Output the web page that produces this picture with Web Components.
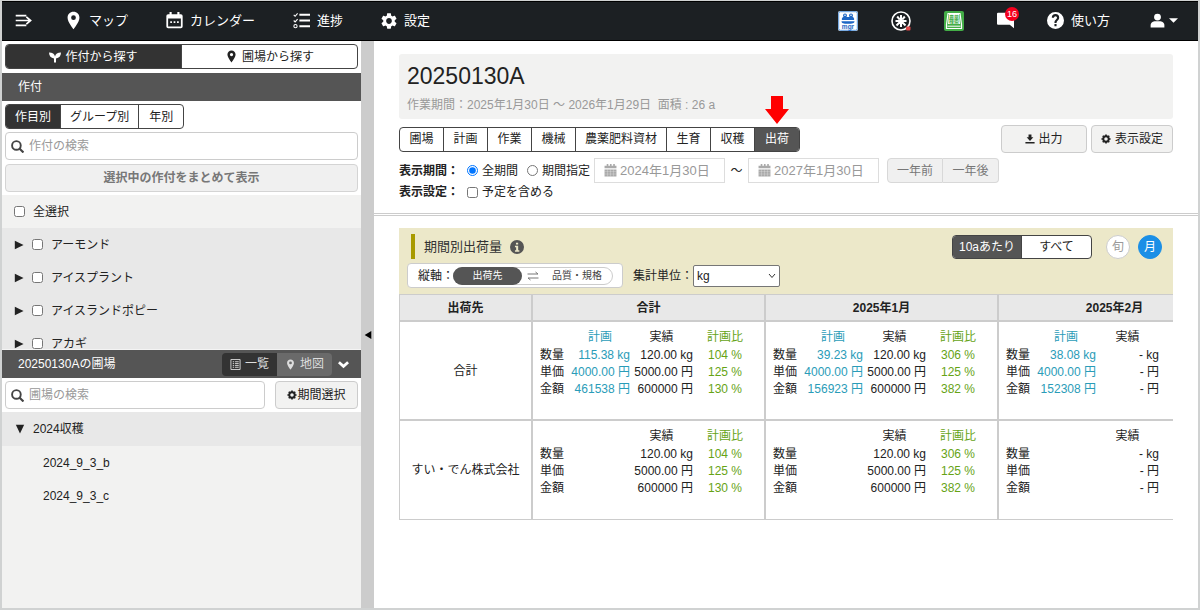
<!DOCTYPE html>
<html lang="ja">
<head>
<meta charset="utf-8">
<meta name="viewport" content="width=device-width, initial-scale=1">
<title>20250130A - 出荷</title>
<style>
  html, body { margin: 0; height: 100%; }
  body {
    font: 12px/16px "Liberation Sans", "Noto Sans CJK JP", sans-serif;
    color: #222;
    background: #fff;
  }
</style>
</head>
<body>
<farm-app></farm-app>

<script>
const BASE = `<style>
  *, *::before, *::after { box-sizing: border-box; }
  button, input, select { font: inherit; color: inherit; margin: 0; }
  button { cursor: pointer; }
  ul { list-style: none; margin: 0; padding: 0; }
  h1, h2, p { margin: 0; font-weight: normal; }
  a { color: inherit; text-decoration: none; }
</style>`;

function define(name, html, setup) {
  const tpl = document.createElement('template');
  tpl.innerHTML = BASE + html;
  customElements.define(name, class extends HTMLElement {
    constructor() {
      super();
      this.attachShadow({ mode: 'open' }).append(tpl.content.cloneNode(true));
    }
    connectedCallback() {
      if (setup && !this.ready) { this.ready = true; setup(this, this.shadowRoot); }
    }
  });
}

/* ---------- icons ---------- */
const PIN = '<path d="M12 1C7.6 1 4.500 4.300 4.500 8.500 4.500 14 12 23 12 23s7.500-9 7.500-14.500C19.500 4.300 16.400 1 12 1zm0 10.500a3 3 0 010-6 3 3 0 010 6z"/>';
const COG = '<circle cx="12" cy="12" r="6.500" fill="none" stroke="currentColor" stroke-width="4.500"/><path d="M12 1v5M12 18v5M1 12h5M18 12h5M4.200 4.200l3.500 3.500M16.300 16.300l3.500 3.500M4.200 19.800l3.500-3.500M16.300 7.700l3.500-3.500" stroke="currentColor" stroke-width="4"/>';
const ICONS = {
  menu: '<path d="M1 5h15M1 12h20M1 19h15M16 7l6 5-6 5" fill="none" stroke="currentColor" stroke-width="2.400"/>',
  pin: PIN,
  calendar: '<path fill-rule="evenodd" d="M5 0h3v3h8V0h3v3h2a2.500 2.500 0 012.500 2.500v15A2.500 2.500 0 0121 23H3a2.500 2.500 0 01-2.500-2.500v-15A2.500 2.500 0 013 3h2zM3 9v11.500h18V9z"/><path d="M6 13h2.400v2.400H6zm4.800 0h2.400v2.400h-2.400zm4.800 0H18v2.400h-2.400z"/>',
  progress: '<path d="M9 4h15M9 12h15M9 20h15" stroke="currentColor" stroke-width="2.800"/><path d="M1 4l2 2 3.500-4M1 12l2 2 3.500-4" fill="none" stroke="currentColor" stroke-width="1.500"/><circle cx="3.500" cy="20" r="2.300" fill="none" stroke="currentColor" stroke-width="1.500"/>',
  gear: '<path d="M19.140 12.940c.04-.3.06-.61.06-.94 0-.32-.02-.64-.07-.94l2.030-1.580c.18-.14.23-.41.12-.61l-1.920-3.320c-.12-.22-.37-.29-.59-.22l-2.390.96c-.5-.38-1.030-.7-1.620-.94l-.36-2.540c-.04-.24-.24-.41-.48-.41h-3.840c-.24 0-.43.17-.47.41l-.36 2.540c-.59.24-1.130.57-1.620.94l-2.390-.96c-.22-.08-.47 0-.59.22L2.740 8.870c-.12.21-.08.47.12.61l2.030 1.580c-.05.3-.09.63-.09.94s.02.64.07.94l-2.030 1.580c-.18.14-.23.41-.12.61l1.920 3.320c.12.22.37.29.59.22l2.390-.96c.5.38 1.030.7 1.620.94l.36 2.540c.05.24.24.41.48.41h3.840c.24 0 .44-.17.47-.41l.36-2.540c.59-.24 1.130-.56 1.620-.94l2.390.96c.22.08.47 0 .59-.22l1.920-3.320c.12-.22.07-.47-.12-.61l-2.010-1.580zM12 15.600c-1.980 0-3.600-1.620-3.600-3.600s1.620-3.600 3.600-3.600 3.600 1.620 3.600 3.600-1.620 3.600-3.600 3.600z"/>',
  cog: COG,
  help: '<path fill-rule="evenodd" d="M12 0a12 12 0 100 24 12 12 0 000-24zm-1.500 20v-3h3v3zm5.600-8.900l-1.200 1.200c-1 1-1.400 1.700-1.400 3.200h-3v-.8c0-1.500.5-2.500 1.500-3.500l1.500-1.500c.5-.5.7-1 .7-1.600a2.200 2.200 0 00-4.400 0H6.800a5.200 5.200 0 0110.400 0c0 1.200-.5 2.300-1.100 3z"/>',
  user: '<circle cx="12" cy="6.500" r="5.500"/><path d="M1 23v-4c0-3.500 4-6 7.500-6h7c3.500 0 7.500 2.500 7.500 6v4z"/>',
  caret: '<path d="M0 6h24L12 18z"/>',
  chat: '<path d="M1.500 1h21A1.500 1.500 0 0124 2.500V23l-6-5H1.500A1.500 1.500 0 010 16.500v-14A1.500 1.500 0 011.500 1z"/>',
  sprout: '<path d="M0 3c7 0 11 3 12 8 1-5 5-8 12-8 0 7-4 11-10 12v8h-4v-8C4 14 0 10 0 3z"/>',
  search: '<circle cx="10" cy="10" r="8" fill="none" stroke="currentColor" stroke-width="3.500"/><path d="M15.500 15.500l7.500 7.500" stroke="currentColor" stroke-width="4"/>',
  list: '<path fill="none" stroke="currentColor" stroke-width="2" d="M2 1h20v22H2z"/><path d="M6 6h3M6 10h3M6 14h3M6 18h3M11 6h8M11 10h8M11 14h8M11 18h8" stroke="currentColor" stroke-width="2"/>',
  chevron: '<path d="M2 7l10 9 10-9" fill="none" stroke="currentColor" stroke-width="6"/>',
  download: '<path d="M8.500 1h7v7H20l-8 9-8-9h4.500zM1 19h22v4H1z"/>',
  date: '<path d="M5 0h3v3h3V0h3v3h3V0h3v3h3v5H1V3h4zM1 10h22v13H1z"/><path d="M1 14h22M1 18.500h22M6.500 10v13M12 10v13M17.500 10v13" stroke="#fff" stroke-opacity=".45"/>',
  info: '<path fill-rule="evenodd" d="M12 0a12 12 0 100 24 12 12 0 000-24zm-1.800 4.500h3.800v3.300h-3.800zM8.500 10H14v7.500h2V20H8.500v-2.500h2v-5h-2z"/>',
  swap: '<path d="M1 8h21l-5-4M23 16H2l5 4" fill="none" stroke="currentColor" stroke-width="2"/>',
  arrow: '<path fill="#f00" d="M6 0h12v13h6L12 28 0 13h6z"/>',
  right: '<path d="M2 2l21 10L2 22z"/>',
  down: '<path d="M2 2h20L12 23z"/>',
  left: '<path d="M22 0v24L2 12z"/>',
  mgr: '<rect width="20" height="20" rx="2" fill="#fff"/><rect x=".7" y=".7" width="18.600" height="18.600" rx="1.500" fill="none" stroke="#2c7bd0" stroke-width=".8"/><g fill="#1e67c4"><circle cx="7" cy="4.500" r="2"/><circle cx="13" cy="4.500" r="2"/><path d="M5 6h10c1 1 1.500 2 1 3H4c-.5-1 0-2 1-3zM3.500 10.200h13c0 2-2 2.600-6.500 2.600s-6.500-.6-6.500-2.600z"/><text x="10" y="17.700" font-size="6.500" font-weight="bold" text-anchor="middle" font-family="Liberation Sans">mgr</text></g><circle cx="7" cy="4.200" r=".8" fill="#fff"/><circle cx="13" cy="4.200" r=".8" fill="#fff"/>',
  rice: '<circle cx="10" cy="10" r="9" fill="none" stroke="#fff" stroke-width="1.600"/><path d="M10 4v12M4.500 10h11M8.800 8.700L6.200 5.500M11.200 8.700l2.600-3.200M9 11l-3.500 3.500M11 11l3.500 3.500" stroke="#fff" stroke-width="2"/><rect x="15" y="15.500" width="4.500" height="4" rx="1" fill="#e04848"/>',
  book: '<rect width="20" height="20" rx="2" fill="#43ad47"/><path d="M4 2.500h12l1.500 11v4h-15v-4z" fill="none" stroke="#fff" stroke-width="1.200"/><path d="M5 3h10l1 10H4z" fill="#fff"/><g fill="#43ad47" font-size="5" text-anchor="middle" font-family="Noto Sans CJK JP" font-weight="bold"><text x="10" y="7.700">農薬</text><text x="10" y="12.300">検索</text></g><path d="M3.500 15.200h13" stroke="#fff" stroke-width="1"/>'
};
const BOXES = { mgr: '0 0 20 20', rice: '0 0 20 20', book: '0 0 20 20', arrow: '0 0 24 28', gear: '2 2 20 20' };

define('ui-icon', `<style>
  :host { display: inline-block; flex: none; width: var(--size, 16px); height: var(--h, var(--size, 16px)); }
  svg { display: block; width: 100%; height: 100%; fill: currentColor; }
</style><svg aria-hidden="true"></svg>`, (el, root) => {
  const svg = root.querySelector('svg'), n = el.getAttribute('name');
  svg.setAttribute('viewBox', BOXES[n] || '0 0 24 24');
  svg.innerHTML = ICONS[n];
});

/* ---------- segmented buttons ---------- */
define('segment-group', `<style>
  :host { display: flex; height: 25px; width: max-content; border: 1px solid #444; border-radius: 4px; background: #fff; }
  :host([fill]) { width: auto; }
  :host([fill]) ::slotted(button) { flex: 1; }
  ::slotted(button) {
    box-sizing: border-box; margin: 0; border: 0; border-right: 1px solid #444; background: none;
    min-width: 44px; padding: 0 9px; line-height: 16px;
    display: flex; align-items: center; justify-content: center; gap: 4px; white-space: nowrap;
  }
  ::slotted(button:last-child) { border-right: 0; }
  /* the host scope's button colour would win without !important */
  ::slotted(button[aria-pressed="true"]) { background: var(--on, #333); color: #fff !important; }
  ::slotted(button:first-child) { border-radius: 3px 0 0 3px; }
  ::slotted(button:last-child) { border-radius: 0 3px 3px 0; }
</style><slot></slot>`);

/* ---------- search box ---------- */
define('search-box', `<style>
  :host { display: block; }
  label { display: flex; align-items: center; gap: 5px; height: 28px; padding: 0 5px; border: 1px solid #ccc; border-radius: 4px; background: #fff; color: #444; }
  ui-icon { --size: 13px; }
  input { flex: 1; min-width: 0; border: 0; padding: 0; outline: 0; background: none; }
  input::placeholder { color: #999; opacity: 1; }
</style><label><ui-icon name="search"></ui-icon><input type="text"></label>`, (el, root) => {
  const i = root.querySelector('input');
  i.placeholder = el.getAttribute('hint');
  i.setAttribute('aria-label', i.placeholder);
});

/* ---------- header ---------- */
define('app-header', `<style>
  :host { display: block; }
  header { display: flex; align-items: center; justify-content: space-between; height: 40px; padding: 0 20px 1px 13px;
    background: #1c2023; border: solid #000; border-width: 1px 0; color: #fff; font-size: 13px; line-height: 20px; }
  nav { display: flex; align-items: center; }
  .left { gap: 38px; }
  .right { gap: 33px; }
  a, button { display: flex; align-items: center; gap: 7px; border: 0; padding: 0; background: none; color: inherit; }
  .menu { --size: 17px; margin-right: -6px; }
  .pin { gap: 6px; }
  .pin ui-icon { --size: 19px; }
  .cal, .list { --size: 17px; }
  .app { --size: 20px; }
  .help ui-icon { --size: 17px; }
  .chat { position: relative; --size: 17px; }
  .badge { position: absolute; left: 8px; top: -5px; width: 14px; height: 14px; border-radius: 7px; background: #f5001d; font-size: 9px; line-height: 14px; text-align: center; }
  .user { gap: 4px; padding-left: 7px; --size: 15px; }
  .user .caret { --size: 9px; }
</style>
<header>
  <nav class="left" aria-label="メイン">
    <button class="menu" aria-label="メニュー"><ui-icon name="menu"></ui-icon></button>
    <a class="pin" href="#map"><ui-icon name="pin"></ui-icon>マップ</a>
    <a class="cal" href="#calendar"><ui-icon name="calendar"></ui-icon>カレンダー</a>
    <a class="list" href="#progress"><ui-icon name="progress"></ui-icon>進捗</a>
    <a href="#settings"><ui-icon name="gear"></ui-icon>設定</a>
  </nav>
  <nav class="right" aria-label="サービス">
    <a class="app" href="#mgr" aria-label="mgr"><ui-icon name="mgr"></ui-icon></a>
    <a class="app" href="#rice" aria-label="米"><ui-icon name="rice"></ui-icon></a>
    <a class="app" href="#book" aria-label="農薬検索"><ui-icon name="book"></ui-icon></a>
    <button class="chat" aria-label="お知らせ"><ui-icon name="chat"></ui-icon><span class="badge">16</span></button>
    <a class="help" href="#help"><ui-icon name="help"></ui-icon>使い方</a>
    <button class="user" aria-label="アカウント"><ui-icon name="user"></ui-icon><ui-icon class="caret" name="caret"></ui-icon></button>
  </nav>
</header>`);

/* ---------- sidebar tree row ---------- */
define('crop-row', `<style>
  :host { display: flex; align-items: center; height: 33px; padding-left: 12px; gap: 8px; line-height: 12px; }
  button { display: flex; border: 0; background: none; padding: 0; color: #222; --size: 10px; }
  label { display: flex; align-items: center; gap: 8px; }
  input { width: 11px; height: 11px; }
</style>
<button aria-label="開く"><ui-icon name="right"></ui-icon></button>
<label><input type="checkbox"><slot></slot></label>`);

/* ---------- sidebar ---------- */
define('crop-sidebar', `<style>
  :host { display: flex; flex-direction: column; flex: 0 0 359px; min-height: 0; background: #f2f2f1; }
  .top { background: #fff; padding: 3px 3px 4px; }
  .bar { display: flex; align-items: center; height: 28px; padding: 0 12px 0 16px; background: #555; color: #fff; }
  .filters { display: flex; flex-direction: column; gap: 3px; padding: 3px; background: #fff; }
  .bulk { height: 28px; margin-top: 1px; border: 1px solid #d4d4d4; border-radius: 4px; background: #f0f0f0; color: #777; font-weight: bold; }
  .all { display: flex; align-items: center; gap: 8px; height: 33px; padding-left: 12px; }
  .all input { width: 11px; height: 11px; }
  .tree { flex: 0 1 122px; overflow: hidden; background: #e8e8e8; border-bottom: 1px solid #f4f4f4; }
  .bar h2 { flex: 1; font-size: 12px; line-height: 16px; }
  .view { display: flex; margin-right: 6px; }
  .view button { display: flex; align-items: center; justify-content: center; gap: 4px; width: 55px; height: 23px; border: 0; padding: 0; color: #ddd; background: #6a6a6a; --size: 11px; border-radius: 0 4px 4px 0; }
  .view button[aria-pressed="true"] { background: #333; border-radius: 4px 0 0 4px; }
  .fold { display: flex; border: 0; background: none; padding: 0; color: #fff; --size: 11px; }
  .find { display: flex; gap: 10px; padding: 3px; background: #fff; }
  .find search-box { flex: 1; }
  .find button { width: 83px; height: 28px; display: flex; align-items: center; justify-content: center; border: 1px solid #ccc; border-radius: 4px; background: #f2f2f1; padding: 0; white-space: nowrap; --size: 10px; }
  .year { display: flex; align-items: center; gap: 8px; width: 100%; height: 34px; padding: 0 13px; border: 0; background: #e8e8e8; --size: 10px; }
  .fields a { display: flex; align-items: center; height: 33px; padding-left: 41px; }
</style>
<div class="top">
  <segment-group fill>
    <button aria-pressed="true"><ui-icon name="sprout" style="--size:12px"></ui-icon>作付から探す</button>
    <button aria-pressed="false"><ui-icon name="pin" style="--size:13px"></ui-icon>圃場から探す</button>
  </segment-group>
</div>
<div class="bar"><h2>作付</h2></div>
<div class="filters">
  <segment-group>
    <button aria-pressed="true">作目別</button><button aria-pressed="false">グループ別</button><button aria-pressed="false">年別</button>
  </segment-group>
  <search-box hint="作付の検索"></search-box>
  <button class="bulk">選択中の作付をまとめて表示</button>
</div>
<label class="all"><input type="checkbox">全選択</label>
<div class="tree">
  <crop-row>アーモンド</crop-row><crop-row>アイスプラント</crop-row><crop-row>アイスランドポピー</crop-row><crop-row>アカギ</crop-row>
</div>
<div class="bar">
  <h2>20250130Aの圃場</h2>
  <div class="view"><button aria-pressed="true"><ui-icon name="list"></ui-icon>一覧</button><button aria-pressed="false"><ui-icon name="pin"></ui-icon>地図</button></div>
  <button class="fold" aria-label="たたむ"><ui-icon name="chevron"></ui-icon></button>
</div>
<div class="find"><search-box hint="圃場の検索"></search-box><button><ui-icon name="cog"></ui-icon>期間選択</button></div>
<button class="year"><ui-icon name="down"></ui-icon>2024収穫</button>
<ul class="fields"><li><a href="#b">2024_9_3_b</a></li><li><a href="#c">2024_9_3_c</a></li></ul>`);

/* ---------- date field ---------- */
define('date-field', `<style>
  :host { display: block; width: 131px; }
  label { display: flex; align-items: center; gap: 3px; height: 25px; padding: 0 9px; border: 1px solid #ddd; background: #fff; color: #aaa; --size: 13px; }
  input { flex: 1; min-width: 0; border: 0; padding: 0; background: none; color: #999; font-size: 13px; }
</style><label><ui-icon name="date"></ui-icon><input type="text" disabled></label>`, (el, root) => {
  const i = root.querySelector('input');
  i.value = el.getAttribute('value');
  i.setAttribute('aria-label', el.getAttribute('label'));
});

/* ---------- crop detail header ---------- */
define('crop-detail', `<style>
  :host { display: block; padding: 13px 25px 12px; border-bottom: 3px double #ccc; }
  .title { height: 65px; padding: 10px 8px; background: #f2f2f1; border-radius: 3px; }
  h1 { font-size: 23px; line-height: 25px; }
  .title p { margin-top: 7px; line-height: 18px; color: #999; white-space: pre-wrap; }
  .tools { display: flex; align-items: center; gap: 4px; margin-top: 6px; }
  .tabs { position: relative; margin-right: auto; --on: #555; }
  .tabs .mark { position: absolute; right: 11px; top: -31px; --size: 24px; --h: 28px; pointer-events: none; }
  .act { display: flex; align-items: center; justify-content: center; gap: 3px; height: 28px; border: 1px solid #ccc; border-radius: 4px; background: #f2f2f1; padding: 0; white-space: nowrap; --size: 10px; }
  .out { width: 86px; }
  .set { width: 82px; gap: 4px; }
  .row { display: flex; align-items: center; margin: 0; padding: 0; border: 0; }
  .period { margin-top: 5px; height: 25px; }
  .plan { height: 18px; }
  b { width: 68px; }
  label { display: flex; align-items: center; gap: 4px; margin-right: 9px; white-space: nowrap; }
  label input { width: 11px; height: 11px; }
  label.span { margin-right: 4px; }
  .wave { width: 23px; text-align: center; }
  .step { display: flex; margin-left: 8px; }
  .step button { width: 56px; height: 25px; padding: 0; border: 1px solid #d8d8d8; background: #f0f0f0; color: #777; border-radius: 4px 0 0 4px; }
  .step button + button { border-left: 0; border-radius: 0 4px 4px 0; }
</style>
<div class="title"><h1>20250130A</h1><p>作業期間：2025年1月30日 ～ 2026年1月29日&nbsp; 面積 : 26 a</p></div>
<div class="tools">
  <div class="tabs">
    <segment-group>
      <button aria-pressed="false">圃場</button><button aria-pressed="false">計画</button><button aria-pressed="false">作業</button><button aria-pressed="false">機械</button><button aria-pressed="false">農薬肥料資材</button><button aria-pressed="false">生育</button><button aria-pressed="false">収穫</button><button aria-pressed="true">出荷</button>
    </segment-group>
    <ui-icon class="mark" name="arrow"></ui-icon>
  </div>
  <button class="act out"><ui-icon name="download"></ui-icon>出力</button>
  <button class="act set"><ui-icon name="cog"></ui-icon>表示設定</button>
</div>
<div class="row period" role="radiogroup" aria-label="表示期間">
  <b>表示期間：</b>
  <label><input type="radio" name="span" checked>全期間</label>
  <label class="span"><input type="radio" name="span">期間指定</label>
  <date-field value="2024年1月30日" label="開始日"></date-field>
  <span class="wave">～</span>
  <date-field value="2027年1月30日" label="終了日"></date-field>
  <div class="step"><button disabled>一年前</button><button disabled>一年後</button></div>
</div>
<div class="row plan"><b>表示設定：</b><label><input type="checkbox">予定を含める</label></div>`);

/* ---------- figures inside a table cell ---------- */
define('cell-figures', `<style>
  :host { display: block; }
  table { border-collapse: collapse; table-layout: fixed; width: 217px; line-height: 17px; }
  th, td { padding: 0; text-align: right; font-weight: normal; white-space: nowrap; }
  thead th { height: 20px; text-align: center; }
  tbody th { text-align: left; }
  .l { width: 30px; } .p { width: 60px; } .a { width: 63px; } .r { width: 64px; }
  tr > :nth-child(2) { color: #2a9cb8; }
  tr > :nth-child(4) { color: #66a315; text-align: center; }
</style>
<table><colgroup><col class="l"><col class="p"><col class="a"><col class="r"></colgroup><thead></thead><tbody></tbody></table>`, (el, root) => {
  const cols = ['plan', 'actual', 'ratio'].map(k => (el.getAttribute(k) || '').split(','));
  const heads = ['計画', '実績', '計画比'];
  root.querySelector('thead').innerHTML = '<tr><td></td>' + heads.map((h, i) => cols[i][0] ? `<th scope="col">${h}</th>` : '<td></td>').join('') + '</tr>';
  root.querySelector('tbody').innerHTML = ['数量', '単価', '金額'].map((h, r) =>
    `<tr><th scope="row">${h}</th>` + cols.map(c => `<td>${c[r] || ''}</td>`).join('') + '</tr>').join('');
});

/* ---------- shipment panel ---------- */
define('shipment-panel', `<style>
  :host { display: block; margin: 12px 25px 0; overflow: hidden; }
  .head { display: flex; flex-direction: column; gap: 4px; height: 66px; padding: 6px 11px 6px 8px; background: #ece8c9; }
  .line { display: flex; align-items: center; }
  .line h2 { display: flex; align-items: center; gap: 8px; height: 25px; margin-left: 4px; padding-left: 9px; border-left: 4px solid #a89a00; font-size: 13px; line-height: 20px; margin-right: auto; color: #333; }
  h2 ui-icon { --size: 14px; color: #555; }
  segment-group { height: 24px; margin-right: 14px; --on: #555; }
  segment-group button { width: 69px; padding: 0; }
  .round { width: 24px; height: 24px; margin-left: 0; padding: 0; border: 1px solid #ccc; border-radius: 12px; background: #fff; color: #999; }
  .round + .round { margin-left: 8px; border-color: #1b8fe6; background: #1b8fe6; color: #fff; }
  .axis { display: flex; align-items: center; width: 216px; height: 25px; padding-left: 10px; border: 1px solid #ccc; border-radius: 4px; background: #fff; white-space: nowrap; }
  .axis span { width: 35px; }
  .pill { display: flex; align-items: center; width: 160px; height: 18px; padding: 0; border: 1px solid #ccc; border-radius: 9px; background: #fff; font-size: 10px; line-height: 16px; --size: 12px; color: #444; }
  .pill b { width: 69px; margin: -1px 5px -1px -1px; line-height: 18px; border-radius: 9px; background: #555; color: #fff; font-weight: normal; }
  .pill ui-icon { margin-right: 13px; color: #777; }
  .unit { display: flex; align-items: center; margin-left: 10px; white-space: nowrap; }
  select { width: 87px; height: 22px; border: 1px solid #767676; border-radius: 2px; padding: 0 3px; appearance: none;
    background: #fff url('data:image/svg+xml,<svg xmlns="http://www.w3.org/2000/svg" width="8" height="6"><path d="M1 1l3 3.500L7 1" fill="none" stroke="%23333"/></svg>') no-repeat right 3px center; }
  table.main { width: 833px; min-width: 100%; table-layout: fixed; border-collapse: separate; border-spacing: 0; border: solid #ccc; border-width: 1px 0 0 1px; }
  .main th, .main td { padding: 0; border: solid #ccc; border-width: 0 2px 2px 0; }
  .main thead th { height: 27px; background: #e8e8e8; font-weight: bold; }
  .main tbody th { height: 99px; font-weight: normal; text-align: center; }
  .main td { padding: 5px 0 0 7px; vertical-align: top; }
  .main tbody tr:last-child > * { border-bottom-width: 1px; }
  .c0 { width: 133px; } .c1 { width: 233px; }
</style>
<div class="head">
  <div class="line">
    <h2>期間別出荷量<ui-icon name="info"></ui-icon></h2>
    <segment-group><button aria-pressed="true">10aあたり</button><button aria-pressed="false">すべて</button></segment-group>
    <button class="round">旬</button><button class="round" aria-pressed="true">月</button>
  </div>
  <div class="line">
    <div class="axis"><span>縦軸：</span><button class="pill"><b>出荷先</b><ui-icon name="swap"></ui-icon>品質・規格</button></div>
    <label class="unit">集計単位：<select><option>kg</option><option>t</option></select></label>
  </div>
</div>
<table class="main">
  <colgroup><col class="c0"><col class="c1"><col class="c1"><col class="c1"></colgroup>
  <thead><tr><th scope="col">出荷先</th><th scope="col">合計</th><th scope="col">2025年1月</th><th scope="col">2025年2月</th></tr></thead>
  <tbody>
    <tr><th scope="row">合計</th>
      <td><cell-figures plan="115.38 kg,4000.00 円,461538 円" actual="120.00 kg,5000.00 円,600000 円" ratio="104 %,125 %,130 %"></cell-figures></td>
      <td><cell-figures plan="39.23 kg,4000.00 円,156923 円" actual="120.00 kg,5000.00 円,600000 円" ratio="306 %,125 %,382 %"></cell-figures></td>
      <td><cell-figures plan="38.08 kg,4000.00 円,152308 円" actual="- kg,- 円,- 円"></cell-figures></td></tr>
    <tr><th scope="row">すい・でん株式会社</th>
      <td><cell-figures actual="120.00 kg,5000.00 円,600000 円" ratio="104 %,125 %,130 %"></cell-figures></td>
      <td><cell-figures actual="120.00 kg,5000.00 円,600000 円" ratio="306 %,125 %,382 %"></cell-figures></td>
      <td><cell-figures actual="- kg,- 円,- 円"></cell-figures></td></tr>
  </tbody>
</table>`);

/* ---------- application frame ---------- */
define('farm-app', `<style>
  :host { display: flex; flex-direction: column; box-sizing: border-box; min-height: 100vh; border: 2px solid #d0d2d2; border-top-width: 1px; }
  .body { display: flex; flex: 1; }
  .split { display: flex; align-items: center; justify-content: center; flex: 0 0 13px; border: 0; padding: 20px 0 0; background: #ccc; color: #000; --size: 8px; --h: 10px; }
  main { flex: 1; min-width: 0; }
</style>
<app-header></app-header>
<div class="body">
  <crop-sidebar></crop-sidebar>
  <button class="split" aria-label="サイドバーを閉じる"><ui-icon name="left"></ui-icon></button>
  <main><crop-detail></crop-detail><shipment-panel></shipment-panel></main>
</div>`);
</script>
</body>
</html>
